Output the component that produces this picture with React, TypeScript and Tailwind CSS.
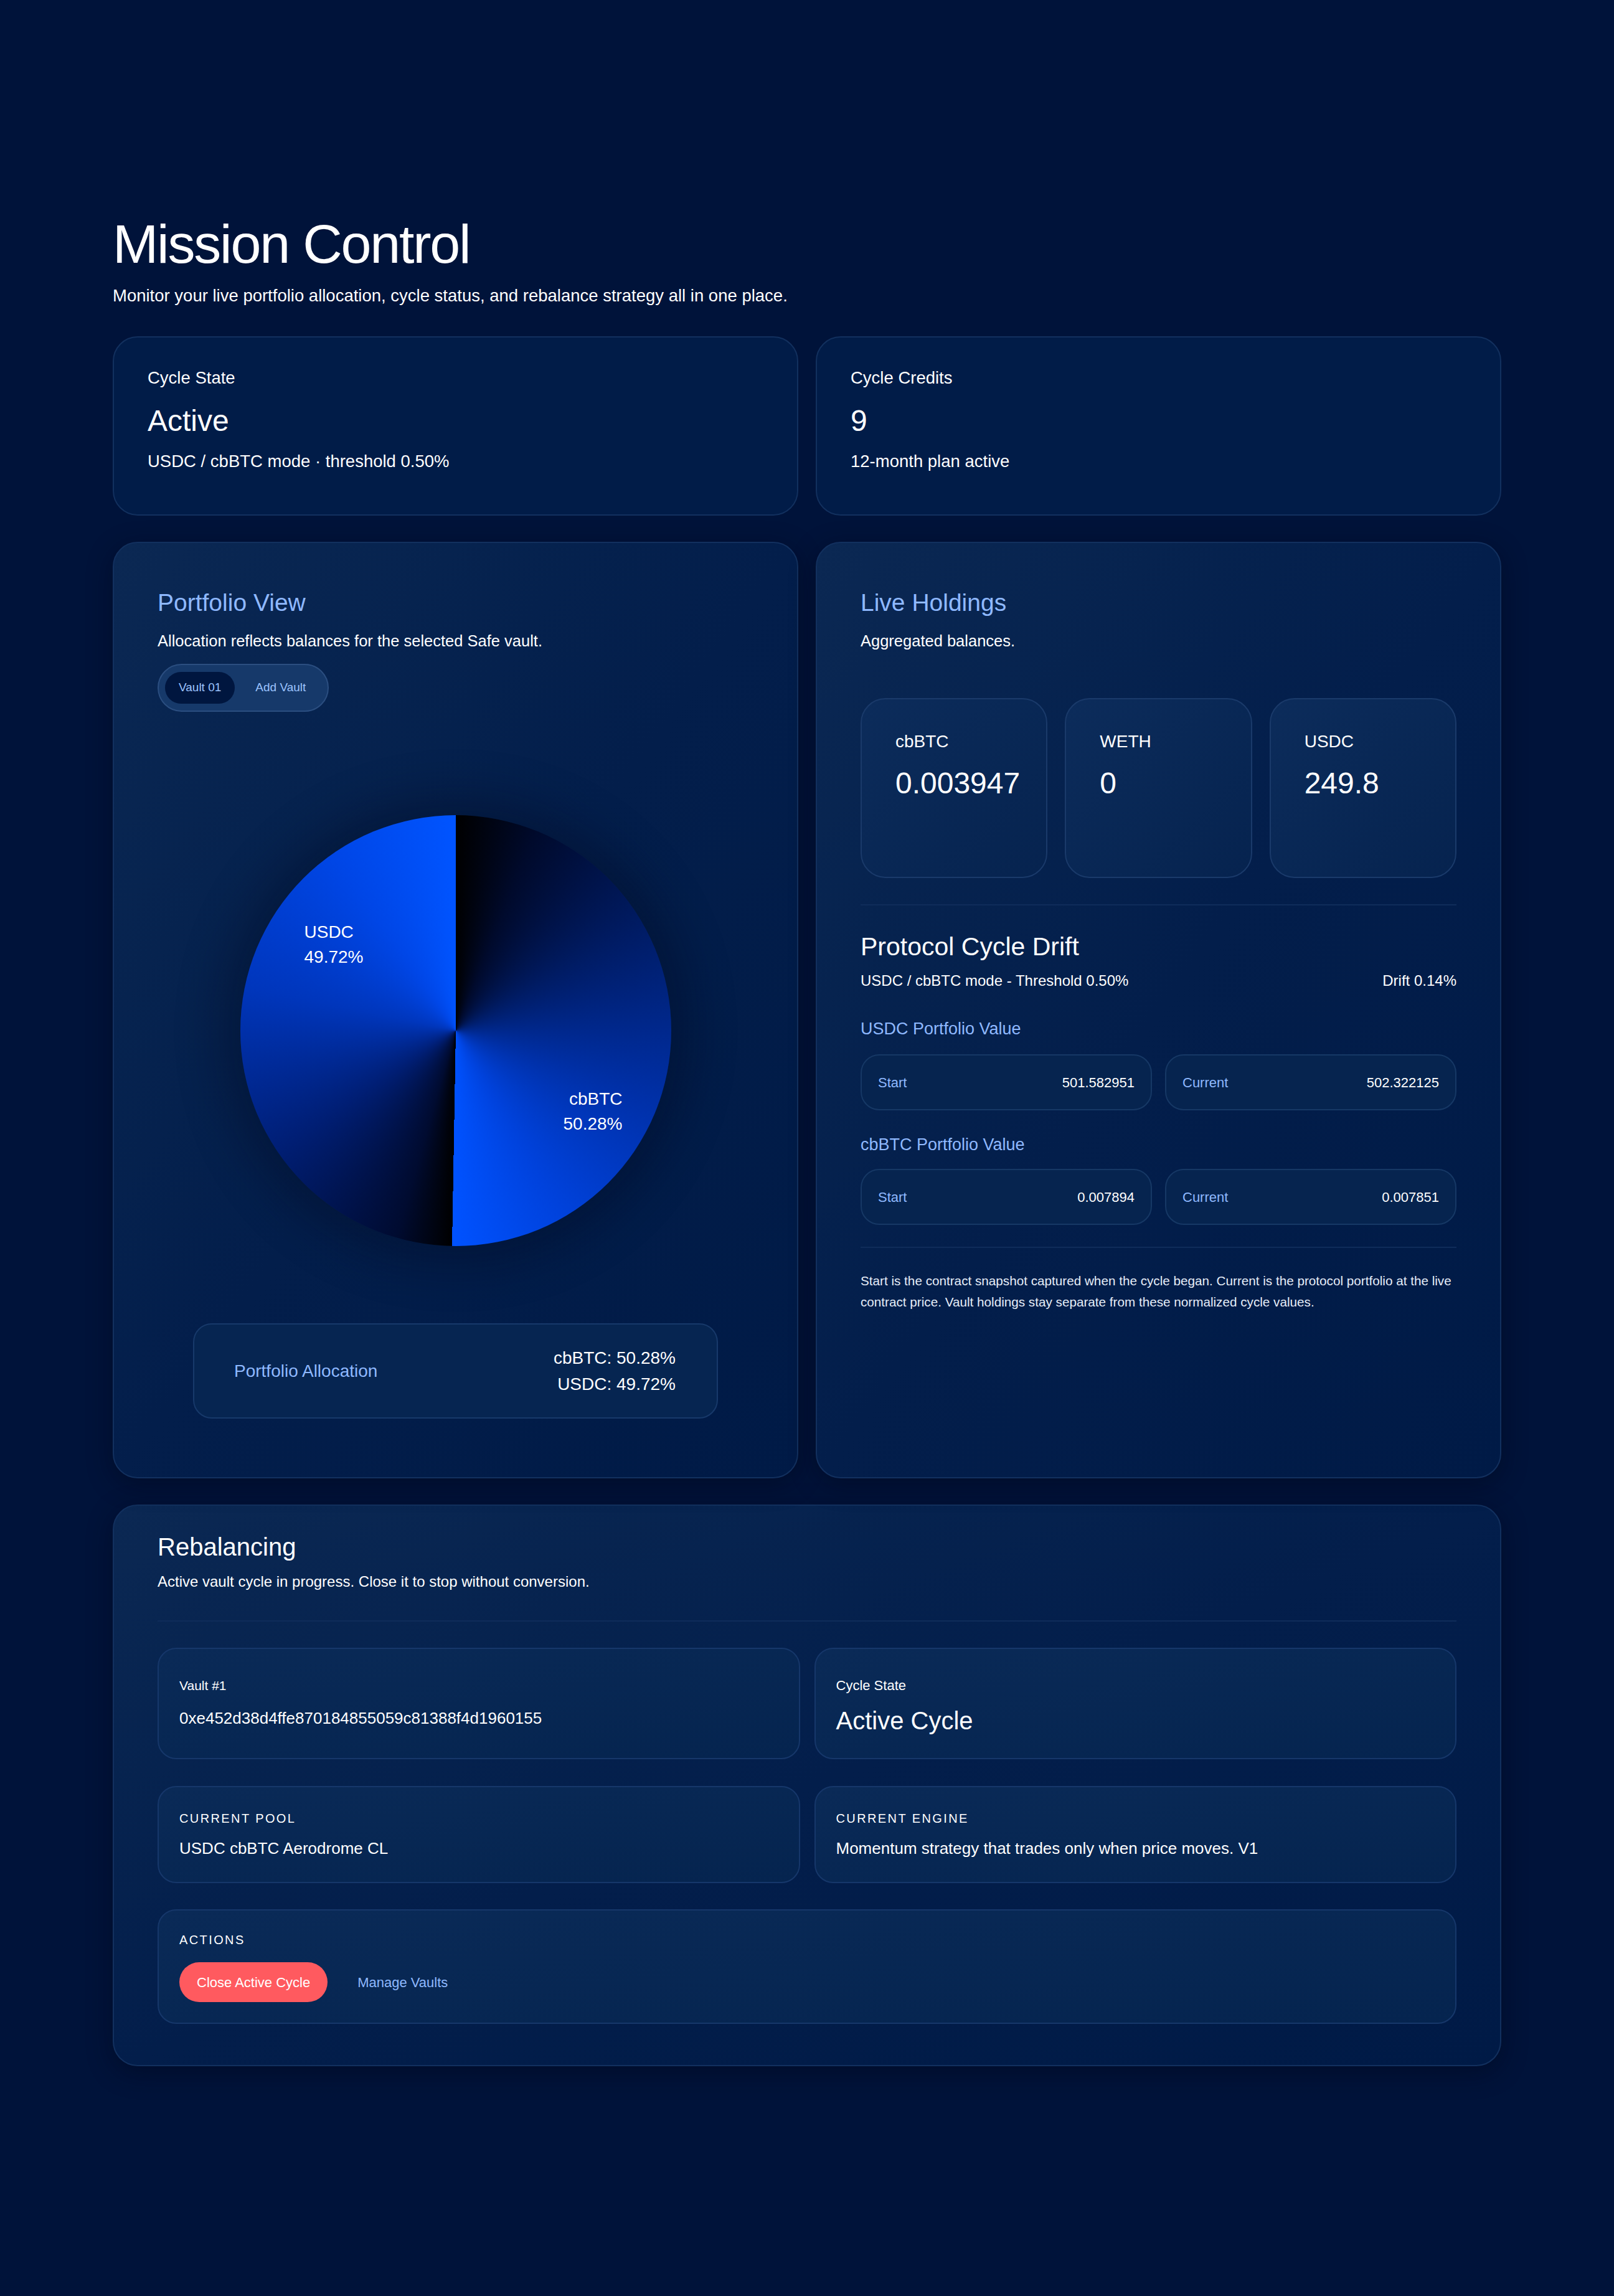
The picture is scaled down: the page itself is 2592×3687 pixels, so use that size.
import React from "react";

const blue = "text-[#8fb9ff]";

function StatCard({ label, value, note }: { label: string; value: string; note: string }) {
  return (
    <div className="rounded-[40px] border-2 border-[#12305e] bg-[#011c48] px-[54px] pt-[46px] pb-[66px]">
      <div className="text-[27.5px] leading-[38px] text-white">{label}</div>
      <div className="mt-[21px] text-[48px] leading-[58px] text-white">{value}</div>
      <div className="mt-[17px] text-[27.5px] leading-[38px] text-white">{note}</div>
    </div>
  );
}

function PanelCard({ children, className = "" }: { children: React.ReactNode; className?: string }) {
  return (
    <div
      className={
        "rounded-[40px] border-2 border-[#12305e] bg-gradient-to-br from-[#0b2853] via-[#031e4b] to-[#001a46] shadow-[0_10px_40px_rgba(0,6,24,0.45)] " +
        className
      }
    >
      {children}
    </div>
  );
}

function Holding({ label, value }: { label: string; value: string }) {
  return (
    <div className="h-[289px] rounded-[40px] border-2 border-[#1a3a6a] bg-gradient-to-br from-[#0c2c5b] to-[#06234f] px-[54px] pt-[49px]">
      <div className="text-[28px] leading-[38px] text-white">{label}</div>
      <div className="mt-[19px] text-[48px] leading-[58px] text-white">{value}</div>
    </div>
  );
}

function ValueBox({ label, value }: { label: string; value: string }) {
  return (
    <div className="flex h-[90px] items-center justify-between rounded-[30px] border-2 border-[#163865] bg-[#06244f] pl-[26px] pr-[26px]">
      <span className={"text-[22px] " + blue}>{label}</span>
      <span className="text-[22px] text-white">{value}</span>
    </div>
  );
}

function InfoCard({ children, className = "" }: { children: React.ReactNode; className?: string }) {
  return (
    <div
      className={
        "rounded-[30px] border-2 border-[#16376a] bg-gradient-to-br from-[#0a2a57] to-[#05244f] px-[33px] " +
        className
      }
    >
      {children}
    </div>
  );
}

function Pie() {
  return (
    <div className="relative mx-auto h-[692px] w-[692px]">
      <div className="absolute inset-0 rounded-full shadow-[0_0_70px_30px_rgba(0,8,32,0.35)]" />
      <div className="absolute inset-0 rounded-full bg-[conic-gradient(from_0deg,#000000_0deg,#000a2c_22deg,#001c66_62deg,#0030a8_110deg,#0042dc_150deg,#0052ff_181deg,#000000_181deg,#000b30_196deg,#001e74_236deg,#0036bc_282deg,#0046e6_325deg,#0054ff_360deg)]" />
      <div className="absolute left-[103px] top-[168px] text-[28px] leading-[40px] text-white">
        <div>USDC</div>
        <div>49.72%</div>
      </div>
      <div className="absolute right-[78px] top-[436px] text-right text-[28px] leading-[40px] text-white">
        <div>cbBTC</div>
        <div>50.28%</div>
      </div>
    </div>
  );
}

export default function App() {
  return (
    <div className="min-h-[3687px] bg-[#00133a] font-['Liberation_Sans',Arial,sans-serif] text-white">
      <div className="mx-auto w-[2230px] pt-[348px]">
        <h1 className="text-[88px] font-normal leading-none tracking-[-0.025em]">Mission Control</h1>
        <p className="mt-[20px] text-[27.5px] leading-[38px]">
          Monitor your live portfolio allocation, cycle status, and rebalance strategy all in one place.
        </p>

        <div className="mt-[46px] grid grid-cols-2 gap-[28px]">
          <StatCard label="Cycle State" value="Active" note="USDC / cbBTC mode · threshold 0.50%" />
          <StatCard label="Cycle Credits" value="9" note="12-month plan active" />
        </div>

        <div className="mt-[42px] grid grid-cols-2 gap-[28px]">
          <PanelCard className="px-[70px] pt-[72px] pb-[94px]">
            <h2 className={"text-[39px] leading-[48px] " + blue}>Portfolio View</h2>
            <p className="mt-[19px] text-[25.5px] leading-[36px]">
              Allocation reflects balances for the selected Safe vault.
            </p>
            <div className="mt-[19px] inline-flex h-[77px] items-center rounded-full border-2 border-[#2b4e80] bg-[#16396a] pl-[10px] pr-[2px]">
              <span className="flex h-[51px] items-center rounded-full bg-[#00163f] px-[22px] text-[19px] font-medium text-[#9cc4ff]">
                Vault 01
              </span>
              <span className="px-[33px] text-[19px] font-medium text-[#9cc4ff]">Add Vault</span>
            </div>

            <div className="mt-[166px]">
              <Pie />
            </div>

            <div className="mx-[57px] mt-[124px] flex h-[153px] items-center justify-between rounded-[30px] border-2 border-[#17396a] bg-[#062551] pl-[64px] pr-[66px]">
              <span className={"text-[28px] " + blue}>Portfolio Allocation</span>
              <div className="text-right text-[28px] leading-[42px] text-white">
                <div>cbBTC: 50.28%</div>
                <div>USDC: 49.72%</div>
              </div>
            </div>
          </PanelCard>

          <PanelCard className="px-[70px] pt-[72px] pb-[60px]">
            <h2 className={"text-[39px] leading-[48px] " + blue}>Live Holdings</h2>
            <p className="mt-[19px] text-[25.5px] leading-[36px]">Aggregated balances.</p>

            <div className="mt-[74px] grid grid-cols-3 gap-[28px]">
              <Holding label="cbBTC" value="0.003947" />
              <Holding label="WETH" value="0" />
              <Holding label="USDC" value="249.8" />
            </div>

            <div className="mt-[42px] h-[2px] bg-[#0f2c5a]" />

            <h3 className="mt-[42px] text-[41px] leading-[48px] text-white">Protocol Cycle Drift</h3>
            <div className="mt-[13px] flex justify-between text-[24px] leading-[36px] text-white">
              <span>USDC / cbBTC mode - Threshold 0.50%</span>
              <span>Drift 0.14%</span>
            </div>

            <div className={"mt-[40px] text-[27px] leading-[38px] " + blue}>USDC Portfolio Value</div>
            <div className="mt-[22px] grid grid-cols-2 gap-[21px]">
              <ValueBox label="Start" value="501.582951" />
              <ValueBox label="Current" value="502.322125" />
            </div>

            <div className={"mt-[36px] text-[27px] leading-[38px] " + blue}>cbBTC Portfolio Value</div>
            <div className="mt-[20px] grid grid-cols-2 gap-[21px]">
              <ValueBox label="Start" value="0.007894" />
              <ValueBox label="Current" value="0.007851" />
            </div>

            <div className="mt-[35px] h-[2px] bg-[#0f2c5a]" />

            <p className="mt-[36px] text-[20.7px] leading-[34px] text-[#e6edf8]">
              Start is the contract snapshot captured when the cycle began. Current is the protocol portfolio at the live
              contract price. Vault holdings stay separate from these normalized cycle values.
            </p>
          </PanelCard>
        </div>

        <PanelCard className="mt-[42px] px-[70px] pt-[42px] pb-[66px]">
          <h2 className="text-[40px] leading-[48px] text-white">Rebalancing</h2>
          <p className="mt-[14px] text-[24px] leading-[36px]">
            Active vault cycle in progress. Close it to stop without conversion.
          </p>
          <div className="mt-[44px] h-[2px] bg-[#0f2c5a]" />

          <div className="mt-[42px] grid grid-cols-2 gap-[23px]">
            <InfoCard className="pt-[45px] pb-[36px]">
              <div className="text-[21px] leading-[28px]">Vault #1</div>
              <div className="mt-[20px] text-[26px] leading-[36px]">0xe452d38d4ffe870184855059c81388f4d1960155</div>
            </InfoCard>
            <InfoCard className="pt-[45px] pb-[36px]">
              <div className="text-[22px] leading-[28px]">Cycle State</div>
              <div className="mt-[18px] text-[40px] leading-[48px]">Active Cycle</div>
            </InfoCard>
          </div>

          <div className="mt-[43px] grid grid-cols-2 gap-[23px]">
            <InfoCard className="py-[36px]">
              <div className="text-[20px] uppercase leading-[28px] tracking-[0.12em]">Current Pool</div>
              <div className="mt-[16px] text-[26px] leading-[36px]">USDC cbBTC Aerodrome CL</div>
            </InfoCard>
            <InfoCard className="py-[36px]">
              <div className="text-[20px] uppercase leading-[28px] tracking-[0.12em]">Current Engine</div>
              <div className="mt-[16px] text-[26px] leading-[36px]">
                Momentum strategy that trades only when price moves. V1
              </div>
            </InfoCard>
          </div>

          <InfoCard className="mt-[42px] pt-[33px] pb-[33px]">
            <div className="text-[20px] uppercase leading-[28px] tracking-[0.12em]">Actions</div>
            <div className="mt-[22px] flex items-center gap-[26px]">
              <button className="h-[64px] rounded-full bg-[#ff5a5f] px-[28px] text-[22px] text-white">
                Close Active Cycle
              </button>
              <button className={"h-[64px] px-[22px] text-[22px] " + blue}>Manage Vaults</button>
            </div>
          </InfoCard>
        </PanelCard>
      </div>
    </div>
  );
}
